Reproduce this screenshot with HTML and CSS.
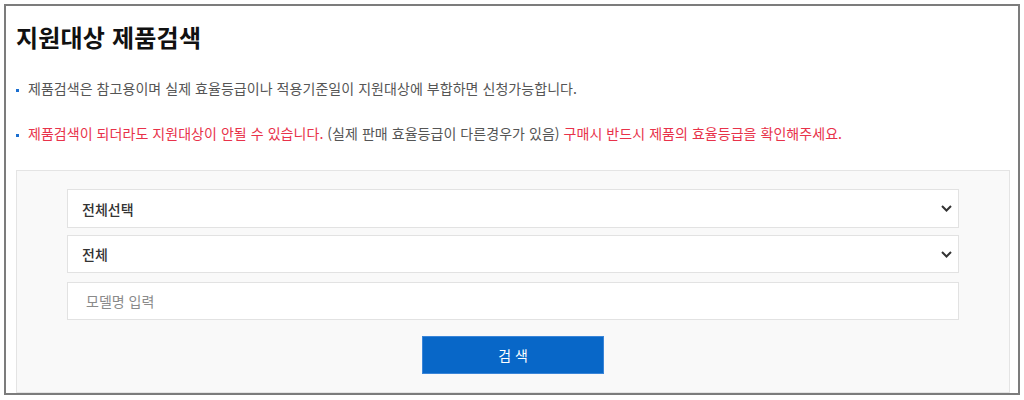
FILE: index.html
```html
<!DOCTYPE html>
<html lang="ko">
<head>
  <meta charset="UTF-8">
  <meta name="viewport" content="width=device-width, initial-scale=1.0">
  <title>지원대상 제품검색</title>
  <link rel="stylesheet" href="styles.css">
</head>
<body>

  <div class="frame">
    <h1 class="title">지원대상 제품검색</h1>

    <ul class="notice">
      <li>제품검색은 참고용이며 실제 효율등급이나 적용기준일이 지원대상에 부합하면 신청가능합니다.</li>
      <li><span class="red">제품검색이 되더라도 지원대상이 안될 수 있습니다.</span> (실제 판매 효율등급이 다른경우가 있음) <span class="red">구매시 반드시 제품의 효율등급을 확인해주세요.</span></li>
    </ul>

    <form class="search-box" id="searchForm">
      <div class="select-wrap">
        <select id="category">
          <option value="">전체선택</option>
        </select>
        <svg class="chevron" width="11" height="7" viewBox="0 0 11 7"><path d="M1 1l4.5 4.5L10 1" fill="none" stroke="#333" stroke-width="2"/></svg>
      </div>

      <div class="select-wrap">
        <select id="grade">
          <option value="">전체</option>
        </select>
        <svg class="chevron" width="11" height="7" viewBox="0 0 11 7"><path d="M1 1l4.5 4.5L10 1" fill="none" stroke="#333" stroke-width="2"/></svg>
      </div>

      <input type="text" id="modelName" class="model-input" placeholder="모델명 입력">

      <div class="btn-row">
        <button type="button" class="btn-search">검 색</button>
      </div>
    </form>
  </div>

</body>
</html>
```

FILE: styles.css
```css
body {
  font-family: "Noto Sans CJK KR", "Noto Sans", sans-serif;
  background-color: #fff;
  margin: 0;
  padding: 0;
}

.frame {
  box-sizing: border-box;
  width: 1016px;
  height: 391px;
  margin: 4px 0 0 4px;
  padding: 0 8px 0 10px;
  border: 2px solid #7c7c7c;
  overflow: hidden;
}

.title {
  margin: 16px 0 0;
  font-size: 24px;
  line-height: 30px;
  font-weight: bold;
  color: #111;
  letter-spacing: 0.2px;
}

.notice {
  list-style: none;
  margin: 26px 0 0;
  padding: 0;
}

.notice li {
  position: relative;
  padding-left: 12px;
  font-size: 14px;
  line-height: 20px;
  color: #555;
  letter-spacing: 0.05px;
}

.notice li + li {
  margin-top: 25px;
}

.notice li::before {
  content: "";
  position: absolute;
  left: 0;
  top: 11px;
  width: 3px;
  height: 3px;
  background-color: #1b6fd0;
}

.notice .red {
  color: #e8324a;
}

.search-box {
  box-sizing: border-box;
  margin: 27px 0 0;
  padding: 18px 50px 20px;
  background-color: #f9f9f9;
  border: 1px solid #e4e4e4;
  height: 223px;
}

.select-wrap {
  position: relative;
  margin-bottom: 7px;
}

.select-wrap + .select-wrap {
  margin-bottom: 9px;
}

.select-wrap select {
  display: block;
  width: 100%;
  height: 39px;
  padding: 0 14px;
  border: 1px solid #e2e2e2;
  background-color: #fff;
  font-family: inherit;
  font-size: 14px;
  font-weight: 500;
  color: #333;
  appearance: none;
  -webkit-appearance: none;
  border-radius: 0;
  outline: none;
}

.select-wrap + .select-wrap select {
  height: 38px;
}

.chevron {
  position: absolute;
  right: 7px;
  top: 16px;
}

.model-input {
  display: block;
  box-sizing: border-box;
  width: 100%;
  height: 38px;
  padding: 0 18px;
  border: 1px solid #e2e2e2;
  background-color: #fff;
  font-family: inherit;
  font-size: 14px;
  outline: none;
}

.model-input::placeholder {
  color: #8a8a8a;
}

.btn-row {
  display: flex;
  justify-content: center;
  margin-top: 16px;
}

.btn-search {
  width: 182px;
  height: 38px;
  border: 1px solid #3a85d8;
  background-color: #0867c8;
  color: #fff;
  font-family: inherit;
  font-size: 14px;
  cursor: pointer;
}
```
